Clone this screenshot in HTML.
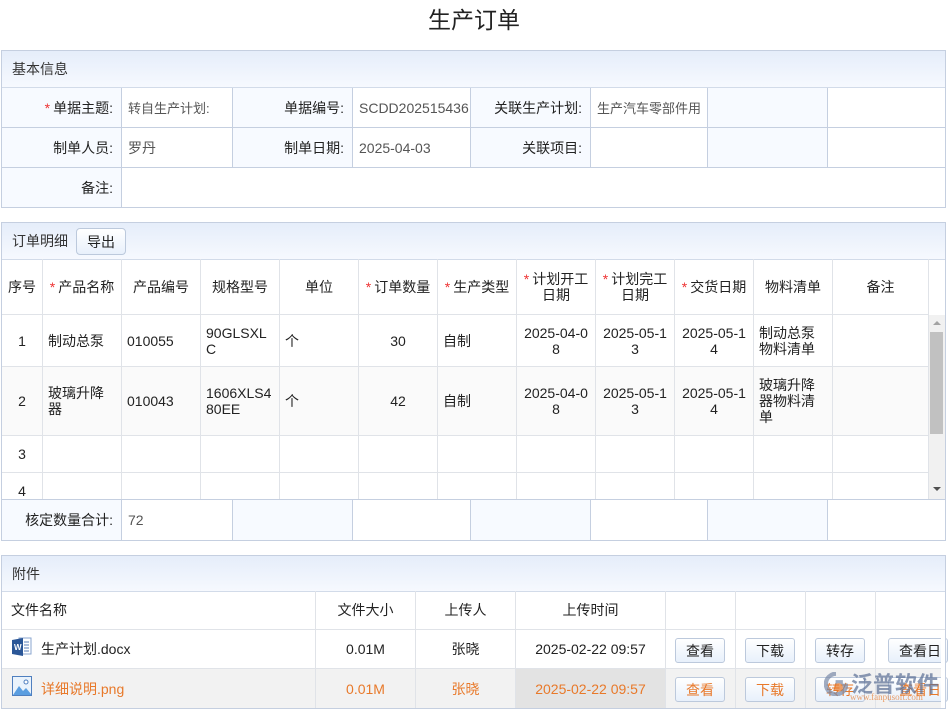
<!DOCTYPE html>
<html><head><meta charset="utf-8">
<style>
*{box-sizing:border-box;margin:0;padding:0}
body{width:952px;height:714px;background:#fff;font-family:"Liberation Sans","Noto Sans CJK SC",sans-serif;font-size:14px;color:#222;position:relative;overflow:hidden}
.a{position:absolute}
.title{left:0;width:948px;top:1px;text-align:center;font-size:23px;color:#222}
.panel{border:1px solid #c5cfe0}
.hd{background:linear-gradient(#e5edfa,#f6f9fe);border-bottom:1px solid #d2dbe9;font-size:14px;color:#333;padding-left:10px}
.c{position:absolute;border-right:1px solid #c5cfe0;border-bottom:1px solid #c5cfe0;display:flex;align-items:center}
.l{background:#f7faff;justify-content:flex-end;padding-right:8px;color:#222}
.v{padding-left:6px;color:#555}
.g{position:absolute;border-right:1px solid #e0e3e8;border-bottom:1px solid #e0e3e8;display:flex;align-items:center;line-height:16px;padding:0 5px}
.ct{justify-content:center;text-align:center}
.r{color:#e33;margin-right:3px}
.btn{position:absolute;height:25px;width:50px;border:1px solid #bcc9dc;border-radius:3px;background:linear-gradient(#fff,#e8f0fb);display:flex;align-items:center;justify-content:center;font-size:14px}
.or{color:#e8792a}
</style></head><body>
<div class="a title">生产订单</div>

<div class="a panel" style="left:1px;top:50px;width:945px;height:158px">
  <div class="hd" style="height:37px;line-height:37px">基本信息</div>
</div>
<div class="c l" style="left:2px;top:88px;width:120px;height:40px"><span class="r">*</span>单据主题:</div>
<div class="c v" style="left:122px;top:88px;width:111px;height:40px;font-size:13px">转自生产计划:</div>
<div class="c l" style="left:233px;top:88px;width:120px;height:40px">单据编号:</div>
<div class="c v" style="left:353px;top:88px;width:118px;height:40px">SCDD202515436</div>
<div class="c l" style="left:471px;top:88px;width:120px;height:40px">关联生产计划:</div>
<div class="c v" style="left:591px;top:88px;width:117px;height:40px;font-size:13px">生产汽车零部件用</div>
<div class="c l" style="left:708px;top:88px;width:120px;height:40px"></div>
<div class="c v" style="left:828px;top:88px;width:117px;height:40px;border-right:none"></div>

<div class="c l" style="left:2px;top:128px;width:120px;height:40px">制单人员:</div>
<div class="c v" style="left:122px;top:128px;width:111px;height:40px">罗丹</div>
<div class="c l" style="left:233px;top:128px;width:120px;height:40px">制单日期:</div>
<div class="c v" style="left:353px;top:128px;width:118px;height:40px">2025-04-03</div>
<div class="c l" style="left:471px;top:128px;width:120px;height:40px">关联项目:</div>
<div class="c v" style="left:591px;top:128px;width:117px;height:40px"></div>
<div class="c l" style="left:708px;top:128px;width:120px;height:40px"></div>
<div class="c v" style="left:828px;top:128px;width:117px;height:40px;border-right:none"></div>

<div class="c l" style="left:2px;top:168px;width:120px;height:39px;border-bottom:none">备注:</div>

<div class="a panel" style="left:1px;top:222px;width:945px;height:319px">
  <div class="hd" style="height:37px;line-height:37px">订单明细</div>
</div>
<div class="btn" style="left:76px;top:228px;width:50px;height:27px;border-radius:4px">导出</div>
<div class="a" style="left:2px;top:259px;width:943px;height:240px;overflow:hidden">
<div class="g ct" style="left:0;top:0;width:41px;height:56px">序号</div>
<div class="g ct" style="left:41px;top:0;width:79px;height:56px"><span class="r">*</span>产品名称</div>
<div class="g ct" style="left:120px;top:0;width:79px;height:56px">产品编号</div>
<div class="g ct" style="left:199px;top:0;width:79px;height:56px">规格型号</div>
<div class="g ct" style="left:278px;top:0;width:79px;height:56px">单位</div>
<div class="g ct" style="left:357px;top:0;width:79px;height:56px"><span class="r">*</span>订单数量</div>
<div class="g ct" style="left:436px;top:0;width:79px;height:56px"><span class="r">*</span>生产类型</div>
<div class="g ct" style="left:515px;top:0;width:79px;height:56px"><span><span class="r">*</span>计划开工<br>日期</span></div>
<div class="g ct" style="left:594px;top:0;width:79px;height:56px"><span><span class="r">*</span>计划完工<br>日期</span></div>
<div class="g ct" style="left:673px;top:0;width:79px;height:56px"><span class="r">*</span>交货日期</div>
<div class="g ct" style="left:752px;top:0;width:79px;height:56px">物料清单</div>
<div class="g ct" style="left:831px;top:0;width:96px;height:56px">备注</div>

<div class="g ct" style="left:0;top:56px;width:41px;height:52px">1</div>
<div class="g" style="left:41px;top:56px;width:79px;height:52px">制动总泵</div>
<div class="g" style="left:120px;top:56px;width:79px;height:52px">010055</div>
<div class="g" style="left:199px;top:56px;width:79px;height:52px">90GLSXL<br>C</div>
<div class="g" style="left:278px;top:56px;width:79px;height:52px">个</div>
<div class="g ct" style="left:357px;top:56px;width:79px;height:52px">30</div>
<div class="g" style="left:436px;top:56px;width:79px;height:52px">自制</div>
<div class="g ct" style="left:515px;top:56px;width:79px;height:52px">2025-04-0<br>8</div>
<div class="g ct" style="left:594px;top:56px;width:79px;height:52px">2025-05-1<br>3</div>
<div class="g ct" style="left:673px;top:56px;width:79px;height:52px">2025-05-1<br>4</div>
<div class="g" style="left:752px;top:56px;width:79px;height:52px">制动总泵<br>物料清单</div>
<div class="g" style="left:831px;top:56px;width:96px;height:52px"></div>

<div style="position:absolute;left:0;top:108px;width:927px;height:69px;background:#fafafa"></div>
<div class="g ct" style="left:0;top:108px;width:41px;height:69px">2</div>
<div class="g" style="left:41px;top:108px;width:79px;height:69px">玻璃升降<br>器</div>
<div class="g" style="left:120px;top:108px;width:79px;height:69px">010043</div>
<div class="g" style="left:199px;top:108px;width:79px;height:69px">1606XLS4<br>80EE</div>
<div class="g" style="left:278px;top:108px;width:79px;height:69px">个</div>
<div class="g ct" style="left:357px;top:108px;width:79px;height:69px">42</div>
<div class="g" style="left:436px;top:108px;width:79px;height:69px">自制</div>
<div class="g ct" style="left:515px;top:108px;width:79px;height:69px">2025-04-0<br>8</div>
<div class="g ct" style="left:594px;top:108px;width:79px;height:69px">2025-05-1<br>3</div>
<div class="g ct" style="left:673px;top:108px;width:79px;height:69px">2025-05-1<br>4</div>
<div class="g" style="left:752px;top:108px;width:79px;height:69px">玻璃升降<br>器物料清<br>单</div>
<div class="g" style="left:831px;top:108px;width:96px;height:69px"></div>

<div class="g ct" style="left:0;top:177px;width:41px;height:37px">3</div>
<div class="g" style="left:41px;top:177px;width:79px;height:37px"></div>
<div class="g" style="left:120px;top:177px;width:79px;height:37px"></div>
<div class="g" style="left:199px;top:177px;width:79px;height:37px"></div>
<div class="g" style="left:278px;top:177px;width:79px;height:37px"></div>
<div class="g" style="left:357px;top:177px;width:79px;height:37px"></div>
<div class="g" style="left:436px;top:177px;width:79px;height:37px"></div>
<div class="g" style="left:515px;top:177px;width:79px;height:37px"></div>
<div class="g" style="left:594px;top:177px;width:79px;height:37px"></div>
<div class="g" style="left:673px;top:177px;width:79px;height:37px"></div>
<div class="g" style="left:752px;top:177px;width:79px;height:37px"></div>
<div class="g" style="left:831px;top:177px;width:96px;height:37px"></div>

<div class="g ct" style="left:0;top:214px;width:41px;height:37px">4</div>
<div class="g" style="left:41px;top:214px;width:79px;height:37px"></div>
<div class="g" style="left:120px;top:214px;width:79px;height:37px"></div>
<div class="g" style="left:199px;top:214px;width:79px;height:37px"></div>
<div class="g" style="left:278px;top:214px;width:79px;height:37px"></div>
<div class="g" style="left:357px;top:214px;width:79px;height:37px"></div>
<div class="g" style="left:436px;top:214px;width:79px;height:37px"></div>
<div class="g" style="left:515px;top:214px;width:79px;height:37px"></div>
<div class="g" style="left:594px;top:214px;width:79px;height:37px"></div>
<div class="g" style="left:673px;top:214px;width:79px;height:37px"></div>
<div class="g" style="left:752px;top:214px;width:79px;height:37px"></div>
<div class="g" style="left:831px;top:214px;width:96px;height:37px"></div>

<div style="position:absolute;left:927px;top:56px;width:16px;height:184px;background:#f1f1f1"></div>
<div style="position:absolute;left:928px;top:73px;width:13px;height:102px;background:#c1c1c1"></div>
<div style="position:absolute;left:931px;top:62px;width:0;height:0;border-left:4px solid transparent;border-right:4px solid transparent;border-bottom:4px solid #a3a3a3"></div>
<div style="position:absolute;left:931px;top:228px;width:0;height:0;border-left:4px solid transparent;border-right:4px solid transparent;border-top:4px solid #505050"></div>
</div>

<div class="a" style="left:2px;top:499px;width:943px;border-top:1px solid #c5cfe0"></div>
<div class="c l" style="left:2px;top:500px;width:120px;height:40px;border-bottom:none">核定数量合计:</div>
<div class="c v" style="left:122px;top:500px;width:111px;height:40px;border-bottom:none">72</div>
<div class="c l" style="left:233px;top:500px;width:120px;height:40px;border-bottom:none"></div>
<div class="c v" style="left:353px;top:500px;width:118px;height:40px;border-bottom:none"></div>
<div class="c l" style="left:471px;top:500px;width:120px;height:40px;border-bottom:none"></div>
<div class="c v" style="left:591px;top:500px;width:117px;height:40px;border-bottom:none"></div>
<div class="c l" style="left:708px;top:500px;width:120px;height:40px;border-bottom:none"></div>

<div class="a panel" style="left:1px;top:555px;width:945px;height:154px">
  <div class="hd" style="height:36px;line-height:36px">附件</div>
</div>
<div class="a" style="left:2px;top:669px;width:943px;height:39px;background:#f2f2f2"></div>
<div class="a" style="left:515px;top:669px;width:150px;height:39px;background:#e3e3e3"></div>
<div class="g" style="left:2px;top:591px;width:314px;height:39px;padding-left:9px">文件名称</div>
<div class="g ct" style="left:316px;top:591px;width:100px;height:39px">文件大小</div>
<div class="g ct" style="left:416px;top:591px;width:100px;height:39px">上传人</div>
<div class="g ct" style="left:516px;top:591px;width:150px;height:39px">上传时间</div>
<div class="g" style="left:666px;top:591px;width:70px;height:39px"></div>
<div class="g" style="left:736px;top:591px;width:70px;height:39px"></div>
<div class="g" style="left:806px;top:591px;width:70px;height:39px"></div>
<div class="g" style="left:876px;top:591px;width:69px;height:39px;border-right:none"></div>

<div class="g" style="left:2px;top:630px;width:314px;height:39px;padding-left:39px">生产计划.docx</div>
<div class="g ct" style="left:316px;top:630px;width:100px;height:39px">0.01M</div>
<div class="g ct" style="left:416px;top:630px;width:100px;height:39px">张晓</div>
<div class="g ct" style="left:516px;top:630px;width:150px;height:39px">2025-02-22 09:57</div>
<div class="g" style="left:666px;top:630px;width:70px;height:39px"></div>
<div class="g" style="left:736px;top:630px;width:70px;height:39px"></div>
<div class="g" style="left:806px;top:630px;width:70px;height:39px"></div>
<div class="g" style="left:876px;top:630px;width:69px;height:39px;border-right:none"></div>

<div class="g or" style="left:2px;top:669px;width:314px;height:39px;padding-left:39px;border-bottom:none">详细说明.png</div>
<div class="g ct or" style="left:316px;top:669px;width:100px;height:39px;border-bottom:none">0.01M</div>
<div class="g ct or" style="left:416px;top:669px;width:100px;height:39px;border-bottom:none">张晓</div>
<div class="g ct or" style="left:516px;top:669px;width:150px;height:39px;border-bottom:none">2025-02-22 09:57</div>
<div class="g" style="left:666px;top:669px;width:70px;height:39px;border-bottom:none"></div>
<div class="g" style="left:736px;top:669px;width:70px;height:39px;border-bottom:none"></div>
<div class="g" style="left:806px;top:669px;width:70px;height:39px;border-bottom:none"></div>

<svg class="a" style="left:12px;top:637px" width="20" height="20" viewBox="0 0 20 20">
<rect x="7" y="1" width="12" height="16" fill="#fff" stroke="#8aa6cf"/>
<line x1="12" y1="5" x2="17" y2="5" stroke="#5a7fb8"/><line x1="12" y1="8" x2="17" y2="8" stroke="#5a7fb8"/><line x1="12" y1="11" x2="17" y2="11" stroke="#5a7fb8"/><line x1="12" y1="14" x2="17" y2="14" stroke="#5a7fb8"/>
<path d="M0 3 L11 1 L11 19 L0 17Z" fill="#2b5797"/>
<text x="2" y="13" font-size="8" font-weight="bold" fill="#fff" font-family="Liberation Sans">W</text>
</svg>
<svg class="a" style="left:12px;top:676px" width="20" height="20" viewBox="0 0 20 20">
<rect x="0.5" y="0.5" width="19" height="19" fill="#eaf3fc" stroke="#4f7fbf"/>
<path d="M1 19 L7 10 L11 15 L14 12 L19 18 L19 19Z" fill="#5b9ee0"/>
<circle cx="14" cy="6" r="2" fill="#fff" stroke="#4f7fbf"/>
</svg>

<div class="btn" style="left:675px;top:638px">查看</div>
<div class="btn" style="left:745px;top:638px">下载</div>
<div class="btn" style="left:815px;top:638px">转存</div>
<div class="btn" style="left:888px;top:638px;width:60px;justify-content:flex-start;padding-left:10px;overflow:hidden">查看日</div>
<div class="btn or" style="left:675px;top:677px">查看</div>
<div class="btn or" style="left:745px;top:677px">下载</div>
<div class="btn or" style="left:815px;top:677px">转存</div>
<div class="btn or" style="left:888px;top:677px;width:60px;justify-content:flex-start;padding-left:10px;overflow:hidden">查看日</div>
<div class="a" style="left:941px;top:630px;width:5px;height:78px;background:#fff"></div>
<div class="a" style="left:945px;top:555px;width:1px;height:154px;background:#c5cfe0"></div>

<div class="a" style="left:824px;top:670px;width:120px;height:40px;opacity:.7">
<svg class="a" style="left:0;top:2px" width="24" height="24" viewBox="0 0 28 28"><path d="M14 2 A12 12 0 1 0 26 16 L16 16 L16 12 L22 12" fill="none" stroke="#7a8aa8" stroke-width="5"/><circle cx="17" cy="18" r="5" fill="#e8792a"/></svg>
<div class="a" style="left:27px;top:-3px;font-size:22px;color:#5b6f95;font-weight:bold;white-space:nowrap">泛普软件</div>
<div class="a" style="left:26px;top:22px;font-size:9px;color:#e8792a;font-family:'Liberation Serif',serif;white-space:nowrap">www.fanpusoft.com</div>
</div>
</body></html>
